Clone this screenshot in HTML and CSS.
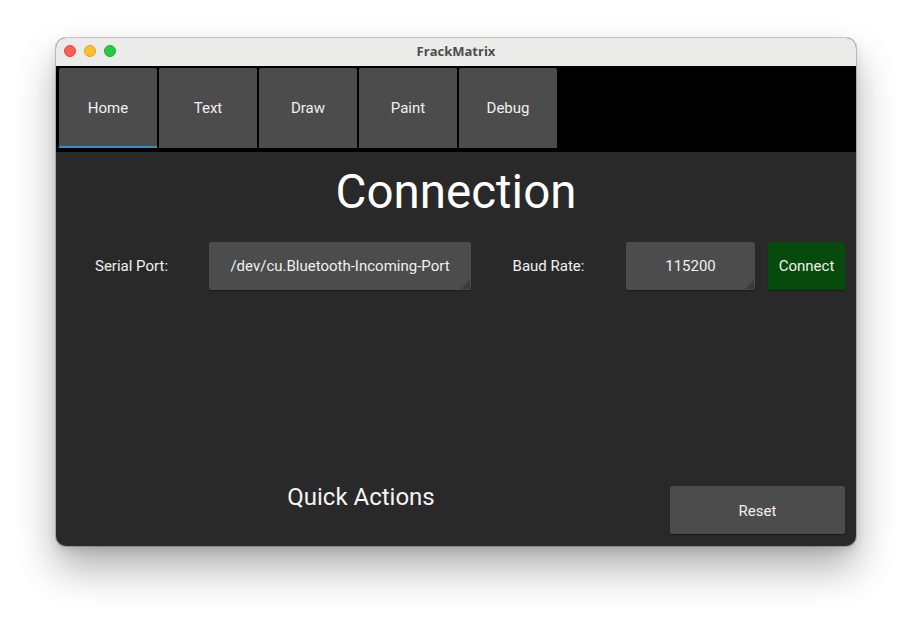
FILE: index.html
```html
<!DOCTYPE html>
<html>
<head>
<meta charset="utf-8">
<link rel="stylesheet" href="styles.css">
</head>
<body>
<div class="window">
  <div class="titlebar">
    <div class="lights">
      <span class="light red"></span>
      <span class="light yellow"></span>
      <span class="light green"></span>
    </div>
    <div class="title">FrackMatrix</div>
  </div>
  <div class="tabbar">
    <div class="tab active">Home</div>
    <div class="tab">Text</div>
    <div class="tab">Draw</div>
    <div class="tab">Paint</div>
    <div class="tab">Debug</div>
  </div>
  <div class="content">
    <h1 class="heading">Connection</h1>
    <div class="row">
      <div class="label label-serial">Serial Port:</div>
      <div class="combo combo-port">/dev/cu.Bluetooth-Incoming-Port</div>
      <div class="label label-baud">Baud Rate:</div>
      <div class="combo combo-baud">115200</div>
      <div class="btn btn-connect">Connect</div>
    </div>
    <div class="spacer"></div>
    <div class="bottom">
      <div class="quick">Quick Actions</div>
      <div class="btn btn-reset">Reset</div>
    </div>
  </div>
</div>
</body>
</html>
```

FILE: styles.css
```css
html, body {
  margin: 0;
  padding: 0;
  background: #ffffff;
  width: 912px;
  height: 620px;
  overflow: hidden;
  font-family: Roboto, "Liberation Sans", sans-serif;
}

.window {
  margin: 38px 0 0 56px;
  width: 800px;
  height: 508px;
  border-radius: 10px;
  overflow: hidden;
  background: #292929;
  box-shadow: 0 0 0 1px rgba(0,0,0,0.18), 0 22px 40px rgba(0,0,0,0.32), 0 4px 10px rgba(0,0,0,0.12);
  display: flex;
  flex-direction: column;
}

.titlebar {
  height: 28px;
  background: #ebebea;
  position: relative;
  display: flex;
  align-items: center;
  justify-content: center;
  flex: none;
}

.lights {
  position: absolute;
  left: 8px;
  top: 7px;
  display: flex;
  gap: 8px;
}

.light {
  width: 12px;
  height: 12px;
  border-radius: 50%;
  box-sizing: border-box;
}
.red { background: #fe5f57; border: 0.5px solid #e14640; }
.yellow { background: #febc2e; border: 0.5px solid #dfa023; }
.green { background: #28c840; border: 0.5px solid #1dad2b; }

.title {
  font-family: "Open Sans", "Liberation Sans", sans-serif;
  font-weight: 700;
  font-size: 13px;
  color: #4c4c4c;
  margin-top: -2px;
}

.tabbar {
  flex: none;
  height: 86px;
  box-sizing: border-box;
  background: #000000;
  padding: 2px 0 4px 3px;
  display: flex;
  gap: 2px;
}

.tab {
  width: 98px;
  height: 80px;
  background: #4c4c4c;
  color: #f0f0f0;
  font-size: 15px;
  display: flex;
  align-items: center;
  justify-content: center;
  box-sizing: border-box;
  border-radius: 2px 2px 0 0;
}

.tab.active {
  border-bottom: 2px solid #2f8fc6;
  padding-top: 2px;
}

.content {
  flex: 1;
  display: flex;
  flex-direction: column;
  color: #f2f2f2;
}

.heading {
  margin: 14px 0 0 0;
  height: 52px;
  line-height: 52px;
  font-size: 47.5px;
  font-weight: 400;
  text-align: center;
  color: #ffffff;
}

.row {
  margin-top: 24px;
  padding: 0 11px;
  display: flex;
  align-items: center;
  height: 48px;
}

.label {
  font-size: 15px;
  text-align: center;
  color: #f0f0f0;
}
.label-serial { width: 129px; margin-right: 13px; }
.label-baud { width: 155px; }

.combo {
  position: relative;
  height: 48px;
  background: #4c4c4c;
  border-radius: 2px;
  display: flex;
  align-items: center;
  justify-content: center;
  font-size: 15px;
  color: #f0f0f0;
  box-shadow: 0 1px 1px rgba(0,0,0,0.35);
}
.combo::after {
  content: "";
  position: absolute;
  right: 1px;
  bottom: 1px;
  width: 0;
  height: 0;
  border-left: 9px solid transparent;
  border-bottom: 9px solid #3a3a3a;
}
.combo-port { width: 262px; }
.combo-baud { width: 129px; margin-right: 13px; }

.btn {
  height: 48px;
  display: flex;
  align-items: center;
  justify-content: center;
  font-size: 15px;
  color: #f0f0f0;
  border-radius: 2px;
  box-shadow: 0 1px 1px rgba(0,0,0,0.35);
}
.btn-connect {
  width: 77px;
  background: #064b0b;
}

.spacer { flex: 1; }

.bottom {
  padding: 0 11px;
  margin-bottom: 12px;
  display: flex;
  align-items: center;
  height: 48px;
}

.quick {
  width: 588px;
  margin-right: 15px;
  text-align: center;
  font-size: 24px;
  color: #f4f4f4;
  margin-top: -26px;
}

.btn-reset {
  width: 175px;
  background: #4c4c4c;
  padding-top: 1px;
  box-sizing: border-box;
}
```
